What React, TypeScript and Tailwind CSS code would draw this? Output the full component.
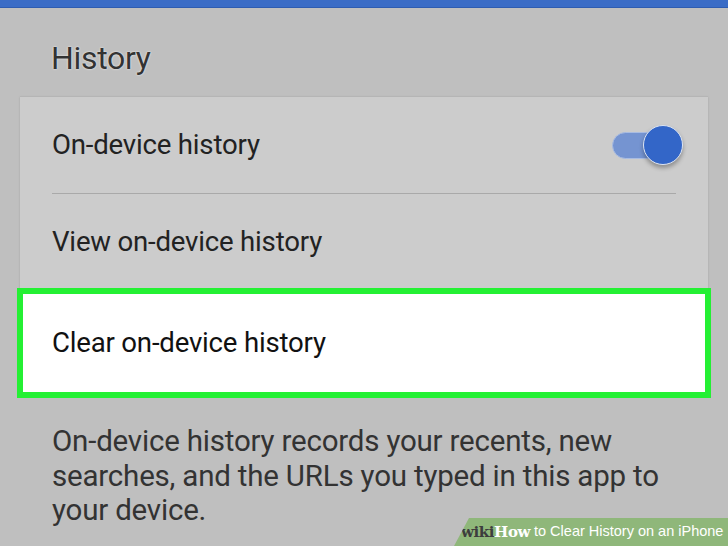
export default function App() {
  return (
    <div
      className="relative w-[728px] h-[546px] overflow-hidden bg-[#bfbfbf] text-[#2b2b2b]"
      style={{fontFamily: "Roboto, 'Liberation Sans', sans-serif"}}
    >
      <div className="h-[8px] bg-[#3a6cc6] border-b border-[#2e5cb0]" />

      <h2 className="pl-[51px] pt-[31px] h-[88px] text-[32px] leading-[38px] tracking-[-0.3px] text-[#333] [text-shadow:0_0_2px_#fff]">
        History
      </h2>

      <div className="mx-[20px] bg-[#cccccc] border-t border-[#b5b5b5] shadow-[0_1px_2px_rgba(0,0,0,0.15)]">
        <div className="h-[96px] flex items-center justify-between pl-[32px] pr-[24px]">
          <span className="text-[27.6px] text-[#222] tracking-[-0.2px]">On-device history</span>
          <Toggle />
        </div>
        <div className="mx-[32px] h-px bg-[#a9a9a9]" />
        <div className="h-[96px] flex items-center pl-[32px]">
          <span className="text-[27.6px] text-[#222] tracking-[-0.2px]">View on-device history</span>
        </div>
      </div>

      <div className="mx-[17px] -mt-[2px] h-[110px] bg-white border-[6px] border-[#24f033] flex items-center pl-[29px]">
        <span className="text-[27.6px] text-[#111] tracking-[-0.2px]">Clear on-device history</span>
      </div>

      <p className="pl-[52px] pt-[26px] text-[29.5px] leading-[34.5px] tracking-[-0.2px] text-[#333] whitespace-nowrap">
        On-device history records your recents, new
        <br />
        searches, and the URLs you typed in this app to
        <br />
        your device.
      </p>

      <div className="absolute right-0 bottom-0 h-[28px] w-[274px] bg-[#8fb77a] [clip-path:polygon(15px_0,100%_0,100%_100%,0_100%)] flex items-center pl-[7px] gap-[4px] whitespace-nowrap">
        <span
          className="text-[15px] font-bold text-[#3d3d3d] tracking-[-0.4px]"
          style={{fontFamily: "'DejaVu Serif', serif"}}
        >
          wiki<span className="text-white">How</span>
        </span>
        <span
          className="text-[14.5px] text-white"
          style={{fontFamily: "'Liberation Sans', Arial, sans-serif"}}
        >
          to Clear History on an iPhone
        </span>
      </div>
    </div>
  )
}

function Toggle() {
  return (
    <div className="relative w-[72px] h-[42px] flex items-center">
      <div className="absolute left-0 w-[56px] h-[27px] rounded-full bg-[#7594d1] border border-[#a9bce2]" />
      <div className="absolute right-[1px] w-[40px] h-[40px] rounded-full bg-[#3366c8] border border-[#dde5f3] shadow-[0_3px_4px_rgba(0,0,0,0.3)]" />
    </div>
  )
}
